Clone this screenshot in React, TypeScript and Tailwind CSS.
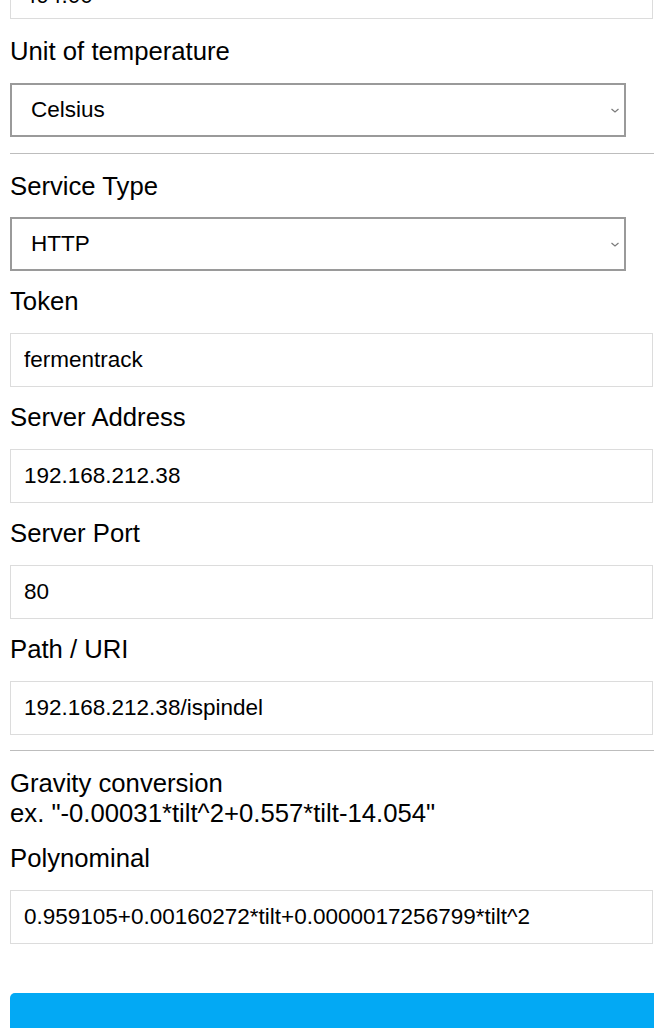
import { useState } from "react";

function Label({ children, className = "" }: { children: React.ReactNode; className?: string }) {
  return <div className={`text-[25.7px] leading-[30px] ${className}`}>{children}</div>;
}

function TextField({ value, className = "" }: { value: string; className?: string }) {
  const [v, setV] = useState(value);
  return (
    <input
      value={v}
      onChange={(e) => setV(e.target.value)}
      className={`block w-[643px] h-[54px] shrink-0 border border-[#dcdcdc] bg-white px-[13px] text-[22.5px] text-black outline-none ${className}`}
    />
  );
}

function SelectField({ options, className = "" }: { options: string[]; className?: string }) {
  return (
    <div className={`relative w-[616px] h-[54px] ${className}`}>
      <select className="block w-full h-full appearance-none border-2 border-[#9a9a9a] bg-white pl-[19px] text-[22.5px] text-black outline-none">
        {options.map((o) => (
          <option key={o}>{o}</option>
        ))}
      </select>
      <svg
        className="pointer-events-none absolute right-[7px] top-[25px] w-[8px] h-[5px] text-[#7a7a7a]"
        viewBox="0 0 8 5"
        fill="none"
        stroke="currentColor"
        strokeWidth={1.2}
      >
        <path d="M0.5 1l3.5 3 3.5-3" />
      </svg>
    </div>
  );
}

export default function App() {
  return (
    <div className="w-[654px] h-[1028px] overflow-hidden bg-white text-black font-['Liberation_Sans',Arial,sans-serif]">
      <form className="flex flex-col w-[720px] pl-[10px]" onSubmit={(e) => e.preventDefault()}>
        <TextField value="494.00" className="-mt-[35px] pt-[8px]" />

        <Label className="mt-[17px]">Unit of temperature</Label>
        <SelectField options={["Celsius", "Fahrenheit", "Kelvin"]} className="mt-[17px]" />

        <div className="mt-[16px] h-px bg-[#bdbdbd]" />

        <Label className="mt-[17px]">Service Type</Label>
        <SelectField options={["HTTP", "TCP", "MQTT", "Ubidots", "InfluxDB"]} className="mt-[16px]" />

        <Label className="mt-[15px]">Token</Label>
        <TextField value="fermentrack" className="mt-[17px]" />

        <Label className="mt-[15px]">Server Address</Label>
        <TextField value="192.168.212.38" className="mt-[17px]" />

        <Label className="mt-[15px]">Server Port</Label>
        <TextField value="80" className="mt-[17px]" />

        <Label className="mt-[15px]">Path / URI</Label>
        <TextField value="192.168.212.38/ispindel" className="mt-[17px]" />

        <div className="mt-[15px] h-px bg-[#bdbdbd]" />

        <Label className="mt-[17px]">
          Gravity conversion
          <br />
          ex. "-0.00031*tilt^2+0.557*tilt-14.054"
        </Label>

        <Label className="mt-[15px]">Polynominal</Label>
        <TextField value="0.959105+0.00160272*tilt+0.0000017256799*tilt^2" className="mt-[17px]" />

        <button
          type="submit"
          className="mt-[49px] h-[80px] w-[700px] shrink-0 rounded-[5px] bg-[#03a9f4]"
          aria-label="Save"
        />
      </form>
    </div>
  );
}
